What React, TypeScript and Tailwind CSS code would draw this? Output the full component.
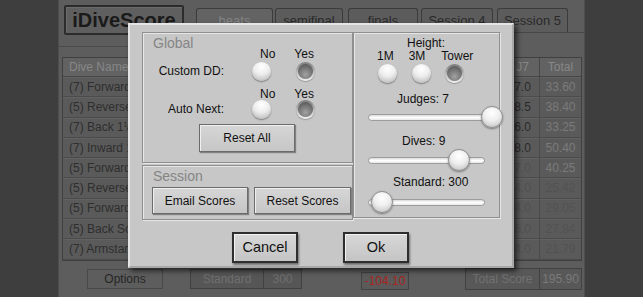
import type { ReactNode } from 'react'

type Row = { name: string; j7: string; total: string; dim?: boolean }

// names run under the dialog; only the start shows
const rows: Row[] = [
  { name: '(7) Forward 1½', j7: '7.0', total: '33.60' },
  { name: '(5) Reverse Dive', j7: '8.5', total: '38.40' },
  { name: '(7) Back 1½ Som.', j7: '6.0', total: '33.25' },
  { name: '(7) Inward 1½', j7: '8.0', total: '50.40' },
  { name: '(5) Forward So', j7: '7.0', total: '40.25', dim: true },
  { name: '(5) Reverse 1½', j7: '4.0', total: '25.42', dim: true },
  { name: '(5) Forward 2½', j7: '4.0', total: '29.05', dim: true },
  { name: '(5) Back Som.', j7: '6.0', total: '27.84', dim: true },
  { name: '(7) Armstand F', j7: '4.0', total: '21.79', dim: true },
]

const tabs = [
  { label: 'heats', w: 'w-[77px]', ml: 'ml-0', active: true },
  { label: 'semifinal', w: 'w-[68px]', ml: 'ml-[2px]' },
  { label: 'finals', w: 'w-[70px]', ml: 'ml-[5px]' },
  { label: 'Session 4', w: 'w-[72px]', ml: 'ml-[3px]' },
  { label: 'Session 5', w: 'w-[71px]', ml: 'ml-[4px]' },
]

function Radio({ on }: { on?: boolean }) {
  if (on) {
    return (
      <div className="w-[19px] h-[19px] rounded-full shrink-0 bg-[linear-gradient(180deg,#7c7c7c,#f2f2f2)] flex items-center justify-center shadow-[0_1px_1px_rgba(0,0,0,0.25)]">
        <div className="w-[15px] h-[15px] rounded-full bg-[radial-gradient(circle_at_50%_70%,#a2a2a2_0%,#727272_55%,#4b4b4b_100%)]" />
      </div>
    )
  }
  return (
    <div className="w-[19px] h-[19px] rounded-full shrink-0 bg-[radial-gradient(circle_at_50%_25%,#ffffff_0%,#ededed_45%,#adadad_100%)] shadow-[0_1px_1.5px_rgba(0,0,0,0.4)]" />
  )
}

function Slider({ width, thumb }: { width: string; thumb: number }) {
  return (
    <div className={`relative h-[22px] ml-[14px] ${width}`}>
      <div className="absolute left-0 right-0 top-[8px] h-[7px] rounded-full border border-[#9c9c9c] bg-[linear-gradient(180deg,#d9d9d9,#ffffff_50%,#e6e6e6)]" />
      <div
        className="absolute top-0 w-[22px] h-[22px] rounded-full border border-[#8e8e8e] bg-[radial-gradient(circle_at_50%_30%,#ffffff_0%,#efefef_45%,#b9b9b9_100%)] shadow-[0_1px_2px_rgba(0,0,0,0.4)]"
        style={{ left: thumb }}
      />
    </div>
  )
}

function GroupBox({ className, children }: { className: string; children: ReactNode }) {
  return (
    <div className={`border border-[#8f8f8f] shadow-[inset_1px_1px_0_#e6e6e6,1px_1px_0_#e6e6e6] ${className}`}>
      {children}
    </div>
  )
}

function DlgButton({ className, children }: { className: string; children: ReactNode }) {
  return (
    <div
      className={`flex items-center justify-center border border-[#6b6b6b] bg-[linear-gradient(180deg,#d6d6d6,#c6c6c6)] shadow-[inset_1px_1px_0_#f0f0f0,1px_1px_1px_rgba(0,0,0,0.35)] text-[12px] text-[#111] ${className}`}
    >
      {children}
    </div>
  )
}

function Dialog() {
  return (
    <div className="absolute left-[128px] top-[23px] w-[386px] h-[245px] bg-[#c7c7c7] border-2 border-t-[#e4e4e4] border-l-[#e4e4e4] border-r-[#a8a8a8] border-b-[#a8a8a8] shadow-[3px_3px_5px_rgba(0,0,0,0.6)] pl-[12px] pt-[7px]">
      <div className="flex">
        <div className="w-[211px] flex flex-col">
          <GroupBox className="h-[131px] flex flex-col">
            <div className="mt-[3px] ml-[10px] h-[14px] leading-[14px] text-[14px] text-[#858585]">Global</div>
            <div className="mt-[-2px] flex h-[12px] leading-[12px] text-[12px] text-[#111]">
              <span className="ml-[117px]">No</span>
              <span className="ml-[19px]">Yes</span>
            </div>
            <div className="mt-[2px] flex items-center h-[19px]">
              <span className="w-[81px] text-right text-[12px] leading-[12px] text-[#111] pb-[1px]">Custom DD:</span>
              <div className="ml-[28px]"><Radio /></div>
              <div className="ml-[25px]"><Radio on /></div>
            </div>
            <div className="mt-[7px] flex h-[12px] leading-[12px] text-[12px] text-[#111]">
              <span className="ml-[117px]">No</span>
              <span className="ml-[19px]">Yes</span>
            </div>
            <div className="mt-0 flex items-center h-[19px]">
              <span className="w-[81px] text-right text-[12px] leading-[12px] text-[#111] pb-[2px]">Auto Next:</span>
              <div className="ml-[28px]"><Radio /></div>
              <div className="ml-[25px]"><Radio on /></div>
            </div>
            <DlgButton className="mt-[5px] ml-[56px] w-[96px] h-[28px]">Reset All</DlgButton>
          </GroupBox>
          <GroupBox className="mt-[2px] h-[55px] flex flex-col">
            <div className="mt-[3px] ml-[10px] h-[14px] leading-[14px] text-[14px] text-[#858585]">Session</div>
            <div className="mt-[4px] ml-[9px] flex">
              <DlgButton className="w-[96px] h-[27px]">Email Scores</DlgButton>
              <DlgButton className="ml-[6px] w-[97px] h-[27px]">Reset Scores</DlgButton>
            </div>
          </GroupBox>
        </div>
        <GroupBox className="w-[147px] h-[186px] flex flex-col text-[12px] leading-[12px] text-[#111]">
          <div className="mt-[4px] ml-[53px] h-[12px]">Height:</div>
          <div className="mt-[1px] flex h-[12px]">
            <span className="ml-[23px]">1M</span>
            <span className="ml-[15px]">3M</span>
            <span className="ml-[16px]">Tower</span>
          </div>
          <div className="mt-[2px] flex">
            <div className="ml-[24px]"><Radio /></div>
            <div className="ml-[15px]"><Radio /></div>
            <div className="ml-[14px]"><Radio on /></div>
          </div>
          <div className="mt-[10px] ml-[43px] h-[12px]">Judges: 7</div>
          <div className="mt-[1px]">
            <Slider width="w-[129px]" thumb={113} />
          </div>
          <div className="mt-[7px] ml-[48px] h-[12px]">Dives: 9</div>
          <div className="mt-[2px]">
            <Slider width="w-[117px]" thumb={80} />
          </div>
          <div className="mt-[5px] ml-[39px] h-[12px]">Standard: 300</div>
          <div className="mt-[3px]">
            <Slider width="w-[117px]" thumb={3} />
          </div>
        </GroupBox>
      </div>
      <div className="mt-[12px] ml-[90px] flex">
        <div className="w-[66px] h-[31px] flex items-center justify-center border-2 border-[#2e2e2e] bg-[linear-gradient(180deg,#d8d8d8,#c4c4c4)] shadow-[inset_1px_1px_0_#f2f2f2,1px_2px_2px_rgba(0,0,0,0.45)] text-[14.5px] text-[#111]">
          Cancel
        </div>
        <div className="ml-[45px] w-[66px] h-[31px] flex items-center justify-center border-2 border-[#2e2e2e] bg-[linear-gradient(180deg,#d8d8d8,#c4c4c4)] shadow-[inset_1px_1px_0_#f2f2f2,1px_2px_2px_rgba(0,0,0,0.45)] text-[14.5px] text-[#111]">
          Ok
        </div>
      </div>
    </div>
  )
}

export default function App() {
  return (
    <div className="relative flex w-[643px] h-[297px] overflow-hidden bg-[#3e3e3e] font-['Liberation_Sans',Arial,sans-serif]">
      <div className="w-[58px] shrink-0" />
      <div className="w-[527px] shrink-0 flex flex-col bg-[#5d5d5d] border-l border-r border-[#4e4e4e]">
        {/* header */}
        <div className="flex items-start h-[47px]">
          <div className="w-[131px] h-[47px] border-b border-[#4a4a4a] pt-[5px] pl-[5px]">
            <div className="w-[120px] h-[30px] rounded-[2px] border-2 border-[#2c2c2c] bg-[#5f5f5f] shadow-[inset_1px_1px_0_#6c6c6c] flex items-center justify-center text-[20px] font-bold text-[#1a1a1a]">
              iDiveScore
            </div>
          </div>
          <div className="flex-1 h-[33px] border-b border-[#474747] flex items-end pl-[6px]">
            {tabs.map((t) => (
              <div
                key={t.label}
                className={`${t.w} ${t.ml} h-[24px] rounded-t-[3px] border border-b-0 border-[#3b3b3b] flex items-center justify-center text-[13px] ${
                  t.active ? 'bg-[#636363] text-[#858585]' : 'bg-[#5c5c5c] text-[#2a2a2a]'
                }`}
              >
                {t.label}
              </div>
            ))}
          </div>
        </div>

        {/* score table */}
        <div className="mt-[10px] ml-[3px] w-[520px] border border-[#404040] text-[12px]">
          <div className="grid grid-cols-[200px_repeat(6,1fr)_34px_41px] h-[19px] bg-[#626262] text-[#878787]">
            <div className="pl-[6px] flex items-center whitespace-nowrap border-r border-b border-[#464646]">Dive Name</div>
            {[1, 2, 3, 4, 5, 6].map((j) => (
              <div key={j} className="border-r border-b border-[#464646]" />
            ))}
            <div className="flex items-center justify-center border-r border-b border-[#464646]">J7</div>
            <div className="flex items-center justify-center border-b border-[#464646]">Total</div>
          </div>
          {rows.map((r) => (
            <div key={r.name} className="grid grid-cols-[200px_repeat(6,1fr)_34px_41px] h-[20.3px] bg-[#5a5a5a]">
              <div className="pl-[6px] flex items-center whitespace-nowrap border-r border-b border-[#4b4b4b] shadow-[inset_0_1px_0_#626262] text-[#2e2e2e]">
                {r.name}
              </div>
              {[1, 2, 3, 4, 5, 6].map((i) => (
                <div key={i} className="border-r border-b border-[#4b4b4b] shadow-[inset_0_1px_0_#626262]" />
              ))}
              <div className={`flex items-center justify-center border-r border-b border-[#4b4b4b] shadow-[inset_0_1px_0_#626262] ${r.dim ? 'text-[#505050]' : 'text-[#2a2a2a]'}`}>
                {r.j7}
              </div>
              <div className={`flex items-center justify-center border-b border-[#4b4b4b] shadow-[inset_0_1px_0_#626262] ${r.total === '40.25' || !r.dim ? 'text-[#7b7b7b]' : 'text-[#525252]'}`}>
                {r.total}
              </div>
            </div>
          ))}
        </div>

        {/* bottom bar */}
        <div className="flex items-start mt-[8px] text-[12px]">
          <div className="ml-[28px] w-[76px] h-[20px] border border-[#484848] bg-[#5d5d5d] flex items-center justify-center text-[#262626]">
            Options
          </div>
          <div className="ml-[27px] flex">
            <div className="w-[74px] h-[20px] border border-[#414141] bg-[#565656] flex items-center justify-center text-[#6f6f6f]">Standard</div>
            <div className="w-[38px] h-[20px] border border-l-0 border-[#414141] bg-[#565656] flex items-center justify-center text-[#6f6f6f]">300</div>
          </div>
          <div className="ml-[59px] mt-[3px] w-[48px] h-[18px] border border-[#434343] bg-[#5a5a5a] flex items-center justify-center text-[#a8261f]">
            -104.10
          </div>
          <div className="ml-[56px] mt-[-1px] flex">
            <div className="w-[75px] h-[22px] border border-[#414141] bg-[#585858] flex items-center justify-center text-[#717171]">Total Score</div>
            <div className="w-[42px] h-[22px] border border-l-0 border-[#414141] bg-[#585858] flex items-center justify-center text-[#7a7a7a]">195.90</div>
          </div>
        </div>
      </div>
      <div className="flex-1" />
      <Dialog />
    </div>
  )
}
